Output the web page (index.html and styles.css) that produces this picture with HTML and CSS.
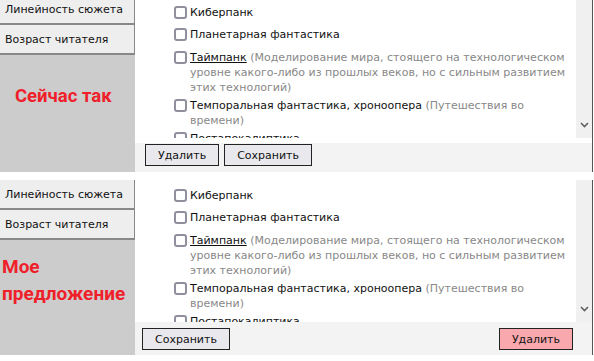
FILE: index.html
```html
<!DOCTYPE html>
<html lang="ru">
<head>
<meta charset="utf-8">
<title>Жанры</title>
<link rel="stylesheet" href="styles.css">
</head>
<body>
<div class="panel panel-current">
  <aside class="side">
    <div class="tab">Линейность сюжета</div>
    <div class="tab">Возраст читателя</div>
    <div class="note note-current">Сейчас так</div>
  </aside>
  <section class="main">
    <div class="view">
      <ul class="items">
        <li class="item"><span class="cb"></span><span class="txt">Киберпанк</span></li>
        <li class="item"><span class="cb"></span><span class="txt">Планетарная фантастика</span></li>
        <li class="item"><span class="cb"></span><span class="txt"><u>Таймпанк</u> <span class="desc">(Моделирование мира, стоящего на технологическом уровне какого-либо из прошлых веков, но с сильным развитием этих технологий)</span></span></li>
        <li class="item"><span class="cb"></span><span class="txt">Темпоральная фантастика, хроноопера <span class="desc">(Путешествия во времени)</span></span></li>
        <li class="item"><span class="cb"></span><span class="txt">Постапокалиптика</span></li>
      </ul>
      <div class="scroll"><svg class="chev" width="9" height="6" viewBox="0 0 9 6"><polyline points="1,1 4.5,4.5 8,1" fill="none" stroke="#606060" stroke-width="1.6"/></svg></div>
    </div>
    <div class="bar bar-current">
      <button class="btn">Удалить</button>
      <button class="btn">Сохранить</button>
    </div>
  </section>
</div>

<div class="panel panel-proposal">
  <aside class="side">
    <div class="tab">Линейность сюжета</div>
    <div class="tab">Возраст читателя</div>
    <div class="note note-proposal">Мое предложение</div>
  </aside>
  <section class="main">
    <div class="view">
      <ul class="items">
        <li class="item"><span class="cb"></span><span class="txt">Киберпанк</span></li>
        <li class="item"><span class="cb"></span><span class="txt">Планетарная фантастика</span></li>
        <li class="item"><span class="cb"></span><span class="txt"><u>Таймпанк</u> <span class="desc">(Моделирование мира, стоящего на технологическом уровне какого-либо из прошлых веков, но с сильным развитием этих технологий)</span></span></li>
        <li class="item"><span class="cb"></span><span class="txt">Темпоральная фантастика, хроноопера <span class="desc">(Путешествия во времени)</span></span></li>
        <li class="item"><span class="cb"></span><span class="txt">Постапокалиптика</span></li>
      </ul>
      <div class="scroll"><svg class="chev" width="9" height="6" viewBox="0 0 9 6"><polyline points="1,1 4.5,4.5 8,1" fill="none" stroke="#606060" stroke-width="1.6"/></svg></div>
    </div>
    <div class="bar bar-proposal">
      <button class="btn">Сохранить</button>
      <button class="btn btn-danger">Удалить</button>
    </div>
  </section>
</div>
</body>
</html>
```

FILE: styles.css
```css
html, body {
  margin: 0;
  padding: 0;
}
body {
  width: 594px;
  height: 361px;
  overflow: hidden;
  background: #fff;
  font-family: "DejaVu Sans", Verdana, sans-serif;
  font-size: 11px;
  color: #111;
}
.panel {
  display: flex;
  width: 592px;
  border-right: 1px solid #555;
}
.panel-current {
  height: 177px;
  margin-top: -5px;
}
.panel-proposal {
  height: 175px;
  margin-top: 8px;
}
.side {
  width: 135px;
  display: flex;
  flex-direction: column;
  flex: none;
}
.tab {
  height: 28px;
  background: #eee;
  border-right: 1px solid #888;
  border-bottom: 2px solid #888;
  padding-left: 5px;
  display: flex;
  align-items: center;
}
.note {
  flex: 1;
  background: #ccc;
  color: #f0202a;
  font-family: Roboto, "Liberation Sans", sans-serif;
  font-weight: bold;
}
.note-current {
  font-size: 18.5px;
  padding: 30px 0 0 15px;
}
.note-proposal {
  font-size: 19px;
  line-height: 27px;
  padding: 13px 0 0 2px;
}
.main {
  flex: 1;
  display: flex;
  flex-direction: column;
}
.view {
  flex: 1;
  display: flex;
  overflow: hidden;
  background: #fff;
}
.panel-current .view {
  border-bottom: 5px solid #fff;
}
.items {
  flex: 1;
  list-style: none;
  margin: 0;
  padding: 10px 6px 0 39px;
}
.panel-proposal .items {
  padding-top: 8px;
}
.item {
  display: flex;
  gap: 3px;
  line-height: 15px;
  min-height: 19px;
  margin-bottom: 3px;
}
.item:nth-child(2) {
  margin-bottom: 4px;
}
.cb {
  flex: none;
  width: 9px;
  height: 9px;
  border: 2px solid #8f8f9d;
  border-radius: 3px;
  margin-top: 1px;
}
.desc {
  color: #888;
}
.scroll {
  width: 16px;
  flex: none;
  background: #f0f0f0;
  display: flex;
  align-items: flex-end;
  justify-content: center;
  padding-bottom: 10px;
  box-sizing: border-box;
}
.bar {
  flex: none;
  background: #f3f3f3;
  display: flex;
  box-sizing: border-box;
  align-items: flex-start;
}
.bar-current {
  height: 29px;
  padding: 1px 10px 0;
  gap: 5px;
}
.bar-proposal {
  height: 33px;
  padding: 6px 19px 0 7px;
  justify-content: space-between;
}
.btn {
  font-family: "DejaVu Sans", Verdana, sans-serif;
  font-size: 11px;
  height: 22px;
  padding: 0 12px;
  border: 1px solid #222;
  background: #e9e9ed;
  color: #111;
  border-radius: 0;
}
.btn-danger {
  background: #f9a8ae;
}
```
